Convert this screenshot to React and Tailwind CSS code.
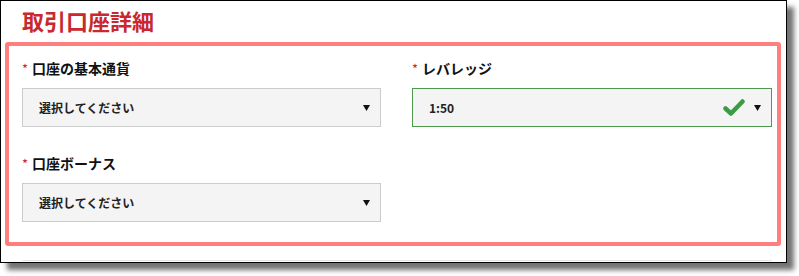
import React from "react";

const JP = { fontFamily: '"Noto Sans CJK JP", "Liberation Sans", sans-serif' };

function Label({ text }) {
  return (
    <div className="flex h-[20px] items-center text-[14px] font-bold leading-[20px] text-[#111]">
      <span className="mr-[4px] mt-[2px] text-[13px] font-normal text-[#c8282e]">*</span>
      {text}
    </div>
  );
}

function Select({ value, ok }) {
  return (
    <div
      className={
        "mt-[10px] flex h-[39px] items-center border pl-[16px] pr-[8px] " +
        (ok ? "border-[#4c9a4c] bg-[#f4f4f4]" : "border-[#cccccc] bg-[#f4f4f4]")
      }
    >
      <span className="flex-1 text-[12px] font-semibold text-[#222]">{value}</span>
      {ok ? (
        <svg width="22" height="17" viewBox="0 0 22 17" className="mr-[9px]">
          <path d="M2.5 9.5 L8 14.5 L19.5 2.5" fill="none" stroke="#3b9c45" strokeWidth="4.5" strokeLinecap="round" strokeLinejoin="round" />
        </svg>
      ) : null}
      <svg width="7" height="6" viewBox="0 0 7 6" className="mr-[2px]">
        <path d="M0 0 H7 L3.5 6 Z" fill="#111" />
      </svg>
    </div>
  );
}

export default function App() {
  return (
    <div className="h-[276px] w-[799px] bg-white" style={JP}>
      <div className="h-[263px] w-[787px] border border-black bg-white shadow-[7px_7px_5px_rgba(0,0,0,0.55)]">
        <div className="flex h-[41px] items-center pl-[21px] pb-[2px] text-[22px] font-bold text-[#c8282e]">
          取引口座詳細
        </div>

        <div className="ml-[4px] w-[776px] rounded-[3px] border-[4px] border-[#ff7f7f] pb-[20px] pl-[13px] pr-[4px] pt-[12px]">
          <div className="grid grid-cols-[359px_360px] gap-x-[31px]">
            <div>
              <Label text="口座の基本通貨" />
              <Select value="選択してください" />
            </div>
            <div>
              <Label text="レバレッジ" />
              <Select value="1:50" ok />
            </div>
            <div className="mt-[26px]">
              <Label text="口座ボーナス" />
              <Select value="選択してください" />
            </div>
          </div>
        </div>

        <div className="ml-[21px] mt-[14px] h-px w-[750px] bg-[#e6e6e6]" />
      </div>
    </div>
  );
}
